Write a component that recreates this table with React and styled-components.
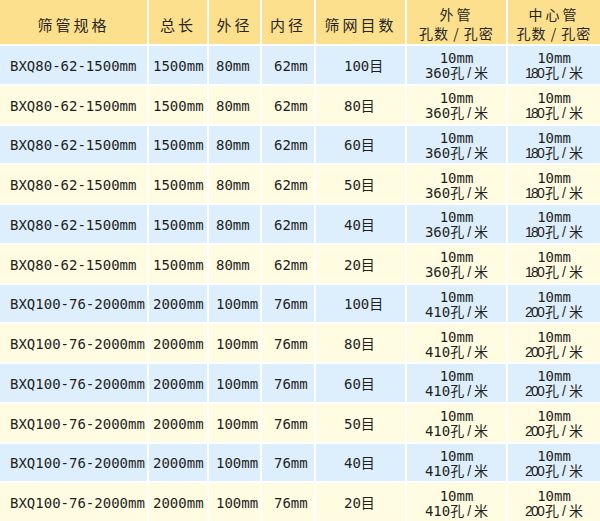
import React from "react";
import styled, { createGlobalStyle } from "styled-components";

const GlobalStyle = createGlobalStyle`
  html, body {
    margin: 0;
    padding: 0;
    background: #ffffff;
  }
`;

const Table = styled.div`
  display: grid;
  grid-template-columns: 147px 58px 51px 52px 89px 99px 1fr;
  grid-template-rows: 44px repeat(12, 1fr);
  gap: 2px;
  width: 600px;
  height: 521px;
  background: #ffffff;
  font-family: "DejaVu Sans Mono", "Noto Sans CJK SC", monospace;
  color: #1e1e1e;
`;

const HeadCell = styled.div`
  display: flex;
  flex-direction: column;
  align-items: center;
  justify-content: center;
  background: #fde08d;
  font-family: "Noto Sans CJK SC", sans-serif;
  font-size: ${(p) => (p.$tight ? "14px" : "15px")};
  line-height: 19px;
  letter-spacing: ${(p) => (p.$tight ? "1px" : "3px")};
  color: #262626;
  padding-top: 4px;
`;

const HeadTitle = styled.span`
  letter-spacing: 3px;
`;

const Cell = styled.div`
  display: flex;
  flex-direction: column;
  align-items: ${(p) => (p.$left ? "flex-start" : "center")};
  justify-content: center;
  background: ${(p) => (p.$blue ? "#ddeefc" : "#fffce1")};
  font-size: 14px;
  line-height: 15px;
  padding-left: ${(p) => p.$pad || 0}px;
  padding-top: 3px;
  white-space: nowrap;
`;

const Sep = styled.span`
  font-family: "Liberation Sans", sans-serif;
  margin: 0 3px;
`;

const Narrow = styled.span`
  font-family: "Liberation Sans", sans-serif;
  letter-spacing: -1.8px;
  margin-right: 2px;
`;

const rows = [
  ["BXQ80-62-1500mm", "1500mm", "80mm", "62mm", "100目", "360", "180"],
  ["BXQ80-62-1500mm", "1500mm", "80mm", "62mm", "80目", "360", "180"],
  ["BXQ80-62-1500mm", "1500mm", "80mm", "62mm", "60目", "360", "180"],
  ["BXQ80-62-1500mm", "1500mm", "80mm", "62mm", "50目", "360", "180"],
  ["BXQ80-62-1500mm", "1500mm", "80mm", "62mm", "40目", "360", "180"],
  ["BXQ80-62-1500mm", "1500mm", "80mm", "62mm", "20目", "360", "180"],
  ["BXQ100-76-2000mm", "2000mm", "100mm", "76mm", "100目", "410", "200"],
  ["BXQ100-76-2000mm", "2000mm", "100mm", "76mm", "80目", "410", "200"],
  ["BXQ100-76-2000mm", "2000mm", "100mm", "76mm", "60目", "410", "200"],
  ["BXQ100-76-2000mm", "2000mm", "100mm", "76mm", "50目", "410", "200"],
  ["BXQ100-76-2000mm", "2000mm", "100mm", "76mm", "40目", "410", "200"],
  ["BXQ100-76-2000mm", "2000mm", "100mm", "76mm", "20目", "410", "200"],
];

export default function App() {
  return (
    <>
      <GlobalStyle />
      <Table>
        <HeadCell>筛管规格</HeadCell>
        <HeadCell>总长</HeadCell>
        <HeadCell>外径</HeadCell>
        <HeadCell>内径</HeadCell>
        <HeadCell>筛网目数</HeadCell>
        <HeadCell $tight>
          <HeadTitle>外管</HeadTitle>
          <span>孔数 / 孔密</span>
        </HeadCell>
        <HeadCell $tight>
          <HeadTitle>中心管</HeadTitle>
          <span>孔数 / 孔密</span>
        </HeadCell>

        {rows.map((r, i) => {
          const blue = i % 2 === 0;
          return (
            <React.Fragment key={i}>
              <Cell $blue={blue} $left $pad={10}>{r[0]}</Cell>
              <Cell $blue={blue} $left $pad={4}>{r[1]}</Cell>
              <Cell $blue={blue} $left $pad={7}>{r[2]}</Cell>
              <Cell $blue={blue} $left $pad={12}>{r[3]}</Cell>
              <Cell $blue={blue} $left $pad={28}>{r[4]}</Cell>
              <Cell $blue={blue}>
                <span>10mm</span>
                <span>
                  {r[5]}孔<Sep>/</Sep>米
                </span>
              </Cell>
              <Cell $blue={blue}>
                <span>10mm</span>
                <span>
                  <Narrow>{r[6]}</Narrow>孔<Sep>/</Sep>米
                </span>
              </Cell>
            </React.Fragment>
          );
        })}
      </Table>
    </>
  );
}
